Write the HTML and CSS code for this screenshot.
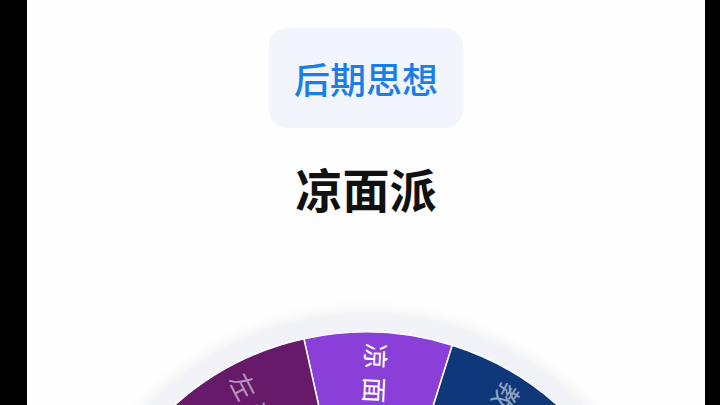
FILE: index.html
```html
<!DOCTYPE html>
<html lang="zh">
<head>
    <meta charset="UTF-8">
    <meta name="viewport" content="width=device-width, initial-scale=1.0">
    <title>转盘</title>
    <link rel="stylesheet" href="styles.css">
</head>
<body>
    <div class="screen">
        <div class="tag">后期思想</div>
        <h1 class="result">凉面派</h1>
        <div class="wheel">
            <svg id="wheel" viewBox="0 0 574 574" width="574" height="574"></svg>
        </div>
    </div>
    <script src="script.js"></script>
</body>
</html>
```

FILE: styles.css
```css
body {
    margin: 0;
    height: 405px;
    overflow: hidden;
    background: #000;
    font-family: 'Noto Sans CJK SC', 'Noto Sans', sans-serif;
}
.screen {
    width: 678px;
    height: 405px;
    margin-left: 27px;
    background: #fefefe;
    overflow: hidden;
    display: flex;
    flex-direction: column;
    align-items: center;
}
.tag {
    margin-top: 28px;
    width: 194px;
    height: 100px;
    border-radius: 18px;
    background: #f2f5fb;
    color: #1b7de6;
    font-size: 36px;
    font-weight: 500;
    display: flex;
    align-items: center;
    justify-content: center;
    flex-shrink: 0;
}
.result {
    margin: 36px 0 0;
    font-size: 47px;
    line-height: 48px;
    font-weight: 700;
    color: #111;
    flex-shrink: 0;
}
.wheel {
    margin-top: 103px;
    width: 608px;
    height: 608px;
    padding: 17px;
    box-sizing: border-box;
    border-radius: 50%;
    background: #f1f3f8;
    box-shadow: 0 0 18px rgba(0, 0, 0, 0.09);
    flex-shrink: 0;
}
.wheel svg {
    display: block;
}
.wheel text {
    font-family: 'Noto Sans CJK SC', sans-serif;
    font-size: 26px;
    letter-spacing: 8px;
}
```

FILE: script.js
```js
const opciones = [
    { texto: '凉面派', color: '#8a3fd9', activo: true },
    { texto: '教条派', color: '#0f387b' },
    { texto: '实干派', color: '#1d6b8f' },
    { texto: '温和派', color: '#2b8a6e' },
    { texto: '激进派', color: '#b5462f' },
    { texto: '保守派', color: '#8a5a1c' },
    { texto: '改良派', color: '#5b2b8f' },
    { texto: '浪漫派', color: '#a8326b' },
    { texto: '自然派', color: '#2f6f3a' },
    { texto: '理想派', color: '#3c4aa0' },
    { texto: '右派', color: '#7a2146' },
    { texto: '左派', color: '#661a69' }
];

const svg = document.getElementById('wheel');
const ns = 'http://www.w3.org/2000/svg';
const c = 287, r = 287;
const paso = 360 / opciones.length;
const inicio = -12.5;

function punto(a) {
    const rad = a * Math.PI / 180;
    return [c + r * Math.sin(rad), c - r * Math.cos(rad)];
}

opciones.forEach((op, i) => {
    const a1 = inicio + i * paso;
    const a2 = a1 + paso;
    const p1 = punto(a1), p2 = punto(a2);

    const path = document.createElementNS(ns, 'path');
    path.setAttribute('d', `M${c} ${c} L${p1[0]} ${p1[1]} A${r} ${r} 0 0 1 ${p2[0]} ${p2[1]} Z`);
    path.setAttribute('fill', op.color);
    path.setAttribute('stroke', '#fff');
    path.setAttribute('stroke-width', '1.5');
    svg.appendChild(path);

    const medio = a1 + paso / 2;
    const text = document.createElementNS(ns, 'text');
    text.textContent = op.texto;
    text.setAttribute('transform', `translate(${c} ${c}) rotate(${medio}) translate(0 -276) rotate(90)`);
    text.setAttribute('dominant-baseline', 'central');
    text.setAttribute('fill', op.activo ? '#fff' : 'rgba(255,255,255,0.55)');
    svg.appendChild(text);
});
```
